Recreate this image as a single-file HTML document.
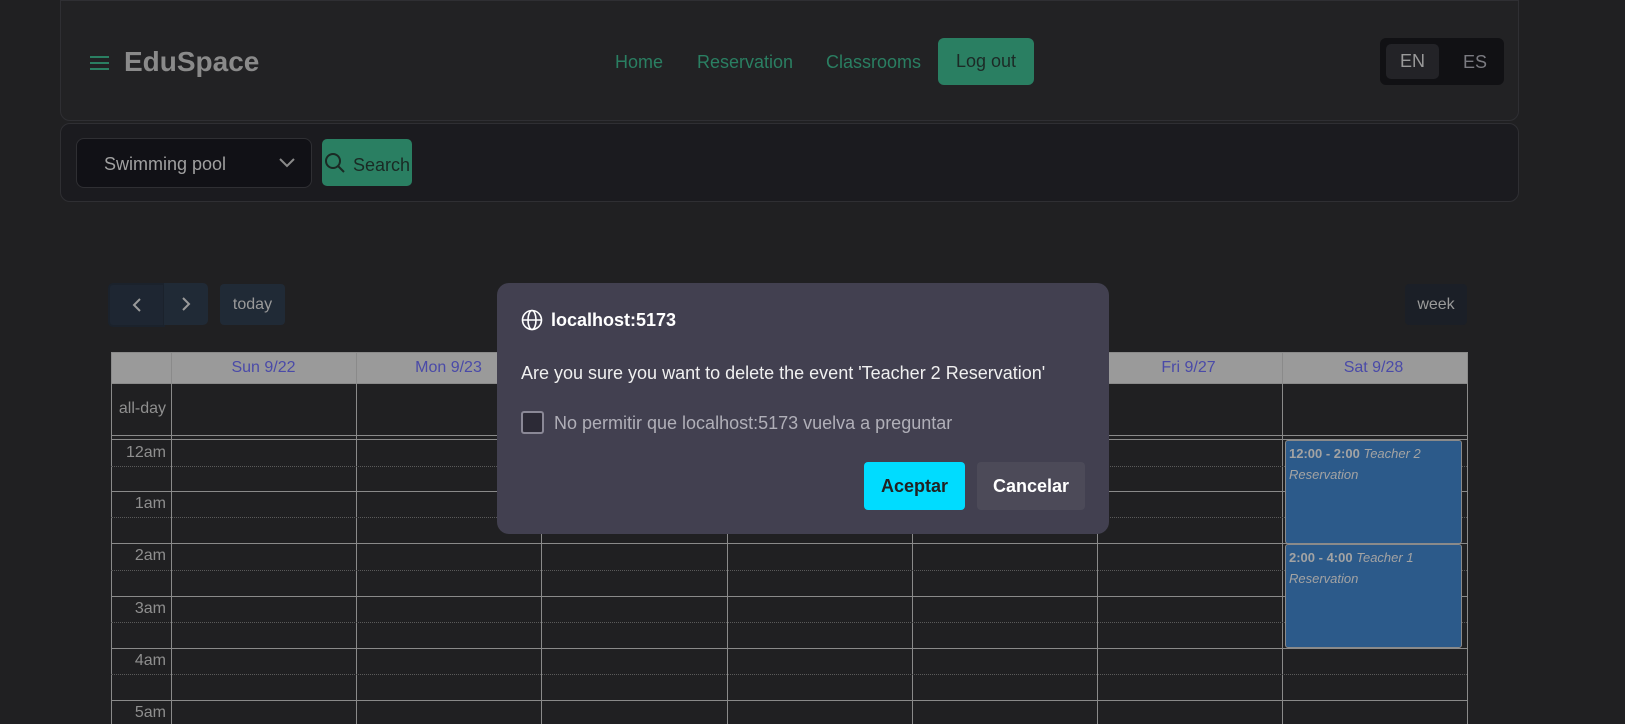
<!DOCTYPE html>
<html><head><meta charset="utf-8"><style>
*{box-sizing:border-box;margin:0;padding:0}
body{width:1625px;height:724px;overflow:hidden;background:#202022;font-family:"Liberation Sans",sans-serif;position:relative}
.abs{position:absolute}
.hdr{left:60px;top:0;width:1459px;height:121px;background:#222224;border:1px solid #2f2f33;border-radius:0 0 10px 10px}
.bar{left:60px;top:123px;width:1459px;height:79px;background:#1b1b1f;border:1px solid #2f2f33;border-radius:10px}
.nav{color:#2a7f62;font-size:18px;top:52px}
.btn{background:#202a36;border-radius:4px;color:#9a9a9a;font-size:16px;display:flex;align-items:center;justify-content:center}
.hl{position:absolute;left:111px;width:1356px;height:1px;background:#8a8a8a}
.dl{position:absolute;left:111px;width:1356px;height:0;border-top:1px dotted #5a5a5a}
.vl{position:absolute;width:1px;background:#8a8a8a}
.tm{position:absolute;left:111px;width:55px;text-align:right;color:#8f8f8f;font-size:16px}
.ev{position:absolute;left:1285px;width:177px;background:#2c5a8a;border:1px solid #8a8a8a;border-radius:3px;color:#a3a3a3;font-size:13px;line-height:21px;padding:2px 3px}
.ev i{font-style:italic}
</style></head><body>
<div class="abs hdr"></div>
<div class="abs" style="left:90px;top:56px;width:19px;height:2px;background:#2a7f62"></div>
<div class="abs" style="left:90px;top:62px;width:19px;height:2px;background:#2a7f62"></div>
<div class="abs" style="left:90px;top:68px;width:19px;height:2px;background:#2a7f62"></div>
<div class="abs" style="left:124px;top:46px;font-size:28px;font-weight:bold;color:#8a8a8a">EduSpace</div>
<div class="abs nav" style="left:615px">Home</div>
<div class="abs nav" style="left:697px">Reservation</div>
<div class="abs nav" style="left:826px">Classrooms</div>
<div class="abs" style="left:938px;top:38px;width:96px;height:47px;background:#2a7f62;border-radius:6px;color:#1c2a26;font-size:18px;display:flex;align-items:center;justify-content:center">Log out</div>
<div class="abs" style="left:1380px;top:38px;width:124px;height:47px;background:#111114;border-radius:6px"></div>
<div class="abs" style="left:1386px;top:44px;width:53px;height:35px;background:#232327;border-radius:5px;color:#9a9a9a;font-size:18px;display:flex;align-items:center;justify-content:center">EN</div>
<div class="abs" style="left:1463px;top:52px;color:#7a7a80;font-size:18px">ES</div>

<div class="abs bar"></div>
<div class="abs" style="left:76px;top:138px;width:236px;height:50px;background:#111116;border:1px solid #2f2f33;border-radius:8px"></div>
<div class="abs" style="left:104px;top:154px;color:#a0a0a0;font-size:18px">Swimming pool</div>
<svg class="abs" style="left:277px;top:156px" width="20" height="14"><path d="M3 3 L10 10 L17 3" stroke="#8a8a8a" stroke-width="2" fill="none"/></svg>
<div class="abs" style="left:322px;top:139px;width:90px;height:47px;background:#2a7f62;border-radius:5px"></div>
<svg class="abs" style="left:324px;top:152px" width="22" height="22"><circle cx="9" cy="9" r="7" stroke="#1a2a24" stroke-width="2" fill="none"/><path d="M14 14 L20 20" stroke="#1a2a24" stroke-width="2"/></svg>
<div class="abs" style="left:353px;top:155px;color:#1a2a24;font-size:18px">Search</div>

<div class="abs btn" style="left:108px;top:283px;width:57px;height:44px;background:#1e2632;border:2px solid #1b222c;border-radius:5px 0 0 5px"><svg width="14" height="16"><path d="M10 2 L4 8 L10 14" stroke="#9a9a9a" stroke-width="2" fill="none"/></svg></div>
<div class="abs btn" style="left:164px;top:283px;width:44px;height:42px;border-radius:0 5px 5px 0"><svg width="14" height="16"><path d="M4 2 L10 8 L4 14" stroke="#9a9a9a" stroke-width="2" fill="none"/></svg></div>
<div class="abs btn" style="left:220px;top:284px;width:65px;height:41px">today</div>
<div class="abs btn" style="left:1405px;top:284px;width:62px;height:41px;background:#1b1f27">week</div>

<div class="abs" style="left:111px;top:352px;width:1356px;height:31px;background:#9a9a9a"></div>
<div class="abs" style="left:171px;top:352px;width:1296px;height:31px;display:flex;color:#4a4aa8;font-size:16px;line-height:31px;text-align:center">
<div style="width:185px">Sun 9/22</div><div style="width:185px">Mon 9/23</div><div style="width:185px">Tue 9/24</div><div style="width:185px">Wed 9/25</div><div style="width:185px">Thu 9/26</div><div style="width:185px">Fri 9/27</div><div style="width:185px">Sat 9/28</div></div>
<div class="hl" style="top:352px"></div><div class="hl" style="top:383px"></div>
<div class="hl" style="top:435px"></div><div class="hl" style="top:439px"></div>
<div class="vl" style="left:111px;top:352px;height:372px"></div>
<div class="vl" style="left:171px;top:352px;height:372px"></div>
<div class="vl" style="left:356px;top:352px;height:372px"></div>
<div class="vl" style="left:541px;top:352px;height:372px"></div>
<div class="vl" style="left:727px;top:352px;height:372px"></div>
<div class="vl" style="left:912px;top:352px;height:372px"></div>
<div class="vl" style="left:1097px;top:352px;height:372px"></div>
<div class="vl" style="left:1282px;top:352px;height:372px"></div>
<div class="vl" style="left:1467px;top:352px;height:372px"></div>
<div class="tm" style="top:400px">all-day</div>
<div class="dl" style="top:466px"></div><div class="hl" style="top:491px"></div><div class="dl" style="top:517px"></div>
<div class="hl" style="top:543px"></div><div class="dl" style="top:570px"></div>
<div class="hl" style="top:596px"></div><div class="dl" style="top:622px"></div>
<div class="hl" style="top:648px"></div><div class="dl" style="top:674px"></div>
<div class="hl" style="top:700px"></div>
<div class="tm" style="top:444px">12am</div>
<div class="tm" style="top:495px">1am</div>
<div class="tm" style="top:547px">2am</div>
<div class="tm" style="top:600px">3am</div>
<div class="tm" style="top:652px">4am</div>
<div class="tm" style="top:704px">5am</div>
<div class="ev" style="top:440px;height:104px"><b>12:00 - 2:00</b> <i>Teacher 2 Reservation</i></div>
<div class="ev" style="top:544px;height:104px"><b>2:00 - 4:00</b> <i>Teacher 1 Reservation</i></div>

<div class="abs" style="left:497px;top:283px;width:612px;height:251px;background:#424050;border-radius:12px"></div>
<svg class="abs" style="left:521px;top:309px" width="22" height="22" fill="none" stroke="#fff" stroke-width="1.6"><circle cx="11" cy="11" r="9.5"/><ellipse cx="11" cy="11" rx="4" ry="9.5"/><path d="M1.5 11 H20.5"/></svg>
<div class="abs" style="left:551px;top:310px;color:#fff;font-size:18px;font-weight:bold">localhost:5173</div>
<div class="abs" style="left:521px;top:363px;color:#f0f0f0;font-size:18px">Are you sure you want to delete the event 'Teacher 2 Reservation'</div>
<div class="abs" style="left:521px;top:411px;width:23px;height:23px;border:2px solid #8a8896;border-radius:3px;background:#2c2a36"></div>
<div class="abs" style="left:554px;top:413px;color:#b0afb8;font-size:18px">No permitir que localhost:5173 vuelva a preguntar</div>
<div class="abs" style="left:864px;top:462px;width:101px;height:48px;background:#00dcff;border-radius:4px;color:#222;font-size:18px;font-weight:bold;display:flex;align-items:center;justify-content:center">Aceptar</div>
<div class="abs" style="left:977px;top:462px;width:108px;height:48px;background:#4c4a58;border-radius:4px;color:#fff;font-size:18px;font-weight:bold;display:flex;align-items:center;justify-content:center">Cancelar</div>
</body></html>
